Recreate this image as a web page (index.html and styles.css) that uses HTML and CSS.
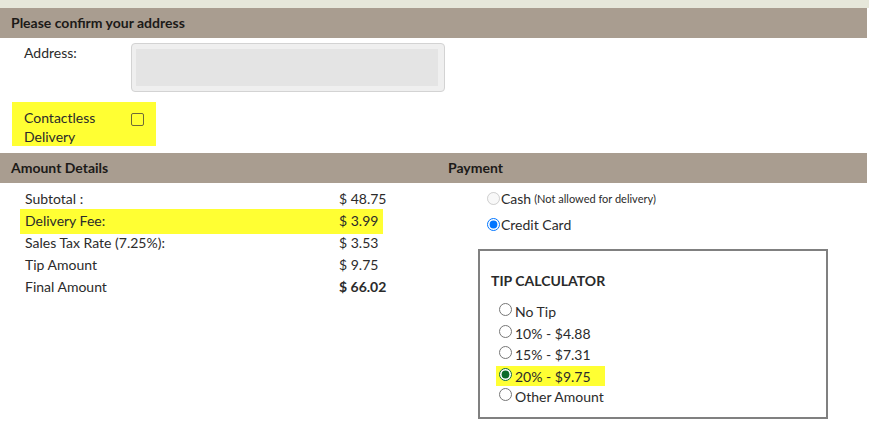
FILE: index.html
```html
<!DOCTYPE html>
<html lang="en">
<head>
    <meta charset="UTF-8">
    <meta name="viewport" content="width=device-width, initial-scale=1.0">
    <title>Checkout</title>
    <link rel="stylesheet" href="styles.css">
</head>
<body>

    <div class="top-strip"></div>

    <div class="page">
        <div class="section-head">Please confirm your address</div>

        <div class="address-row">
            <div class="field-label">Address:</div>
            <div class="address-box"><div class="address-fill"></div></div>
        </div>

        <div class="contactless">
            <label class="contactless-label" for="contactless">Contactless Delivery</label>
            <input type="checkbox" id="contactless" class="check">
        </div>

        <div class="section-head split">
            <div class="col-left">Amount Details</div>
            <div class="col-right">Payment</div>
        </div>

        <div class="columns">
            <div class="amounts">
                <div class="amount-row"><span class="amount-name">Subtotal :</span><span>$ 48.75</span></div>
                <div class="amount-row marked"><span class="amount-name">Delivery Fee:</span><span>$ 3.99</span></div>
                <div class="amount-row"><span class="amount-name">Sales Tax Rate (7.25%):</span><span>$ 3.53</span></div>
                <div class="amount-row"><span class="amount-name">Tip Amount</span><span>$ 9.75</span></div>
                <div class="amount-row"><span class="amount-name">Final Amount</span><strong>$ 66.02</strong></div>
            </div>

            <div class="payment">
                <label class="pay-option">
                    <input type="radio" name="pay" disabled> Cash <small>(Not allowed for delivery)</small>
                </label>
                <label class="pay-option">
                    <input type="radio" name="pay" class="blue" checked> Credit Card
                </label>

                <div class="tip-box">
                    <h3>TIP CALCULATOR</h3>
                    <label class="tip-option"><input type="radio" name="tip">No Tip</label>
                    <label class="tip-option"><input type="radio" name="tip">10% - $4.88</label>
                    <label class="tip-option"><input type="radio" name="tip">15% - $7.31</label>
                    <label class="tip-option marked"><input type="radio" name="tip" checked>20% - $9.75</label>
                    <label class="tip-option"><input type="radio" name="tip">Other Amount</label>
                </div>
            </div>
        </div>
    </div>

</body>
</html>
```

FILE: styles.css
```css
body {
    margin: 0;
    font-family: Lato, "Open Sans", Arial, sans-serif;
    font-size: 14px;
    color: #2b2b2b;
    background: #fff;
}

.top-strip {
    height: 8px;
    background-color: #e6e7da;
}

.page {
    margin-right: 2px;
}

.section-head {
    height: 30px;
    line-height: 30px;
    background-color: #a99d90;
    color: #1c1a18;
    font-weight: bold;
    font-size: 14px;
    padding-left: 11px;
}

.section-head.split {
    display: flex;
    padding-left: 0;
}

.split .col-left {
    width: 437px;
    padding-left: 11px;
    box-sizing: border-box;
}

.split .col-right {
    padding-left: 11px;
}

/* address */

.address-row {
    display: flex;
    padding: 5px 0 0 24px;
}

.field-label {
    width: 107px;
    line-height: 20px;
}

.address-box {
    width: 314px;
    height: 49px;
    box-sizing: border-box;
    border: 1px solid #d3d3d3;
    border-radius: 4px;
    background-color: #efefef;
    padding: 5px 6px 5px 4px;
}

.address-fill {
    height: 100%;
    background-color: #e4e4e4;
}

.contactless {
    display: flex;
    align-items: flex-start;
    width: 144px;
    height: 44px;
    box-sizing: border-box;
    margin: 10px 0 7px 12px;
    padding: 6px 0 0 12px;
    background-color: #ffff33;
}

.contactless-label {
    width: 95px;
    line-height: 19px;
}

.check {
    appearance: none;
    width: 13px;
    height: 13px;
    margin: 5px 0 0 12px;
    border: 1px solid #6f6b36;
    border-radius: 2px;
    background: transparent;
    box-sizing: border-box;
}

/* amounts + payment */

.columns {
    display: flex;
}

.amounts {
    width: 437px;
    padding: 5px 0 0 20px;
    box-sizing: border-box;
}

.amount-row {
    display: flex;
    width: 363px;
    height: 22px;
    line-height: 22px;
    padding-left: 5px;
    box-sizing: border-box;
    white-space: nowrap;
}

.amount-row.marked {
    background-color: #ffff33;
    height: 25px;
    padding-top: 1px;
    margin: -1px 0 -2px;
}

.amount-name {
    flex: none;
    width: 314px;
}

.amount-row strong {
    font-weight: bold;
}

.payment {
    padding: 2px 0 0 50px;
}

.pay-option {
    display: flex;
    align-items: center;
    height: 26px;
    white-space: nowrap;
}

.pay-option input {
    margin: 0 1px 0 0;
    width: 13px;
    height: 13px;
}

.pay-option small {
    font-size: 11px;
    margin-left: 3px;
}

.pay-option .blue {
    accent-color: #0075ff;
}

.tip-box {
    width: 350px;
    height: 170px;
    box-sizing: border-box;
    margin: 12px 0 0 -9px;
    border: 2px solid #808080;
    padding: 15px 0 0 11px;
}

.tip-box h3 {
    margin: 0 0 5px;
    font-size: 14px;
    font-weight: bold;
    color: #2a2a2a;
    line-height: 30px;
}

.tip-option {
    display: flex;
    align-items: flex-start;
    height: 21.5px;
    line-height: 21px;
    padding-left: 3px;
    margin-left: 5px;
    box-sizing: border-box;
    white-space: nowrap;
}

.tip-option input {
    flex: none;
    width: 13px;
    height: 13px;
    margin: 2px 3px 0 0;
    accent-color: #0c6b2a;
}

.tip-option.marked {
    width: 109px;
    height: 20px;
    background-color: #ffff33;
}
```
